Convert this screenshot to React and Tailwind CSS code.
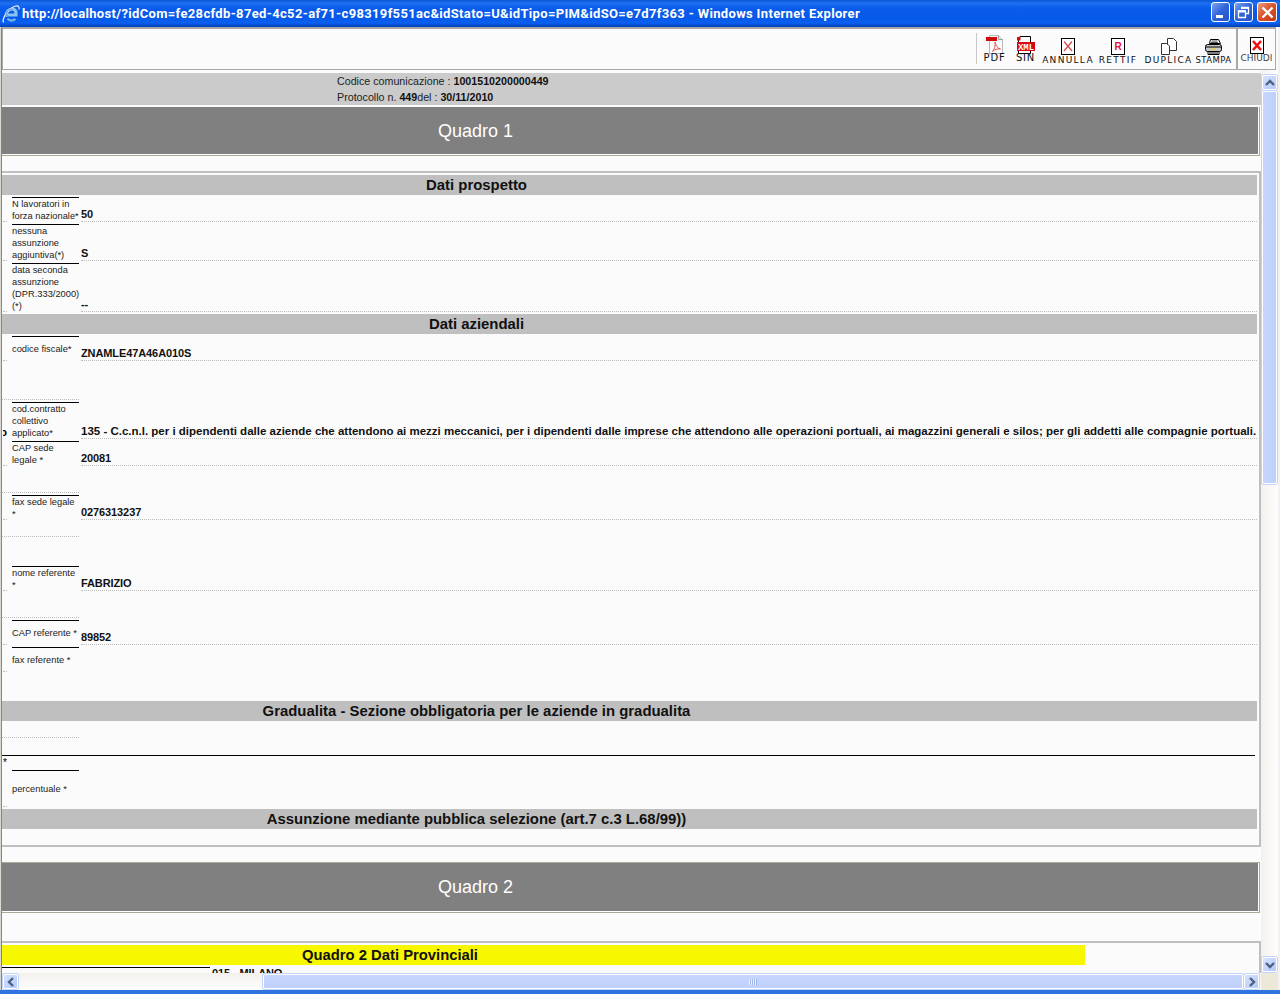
import React from "react";

const FONT = "[font-family:'Liberation_Sans',Arial,sans-serif]";

function Chevron({ dir }) {
  const d = {
    up: "M2 8 L6 4 L10 8",
    down: "M2 4 L6 8 L10 4",
    left: "M8 2 L4 6 L8 10",
    right: "M4 2 L8 6 L4 10",
  }[dir];
  return (
    <svg width="12" height="12" viewBox="0 0 12 12">
      <path d={d} fill="none" stroke="#4d6185" strokeWidth="2.4" />
    </svg>
  );
}

function ScrollButton({ dir }) {
  return (
    <div className="w-[15px] h-[15px] shrink-0 flex items-center justify-center rounded-[2px] border border-white bg-[linear-gradient(135deg,#d6e2fd,#b4c9f8)] shadow-[0_0_0_1px_#c3d4fc]">
      <Chevron dir={dir} />
    </div>
  );
}

function WinButton({ kind }) {
  const bg =
    kind === "close"
      ? "w-[20px] bg-[linear-gradient(135deg,#ee9a7e,#d8512a_50%,#c23a17)]"
      : "w-[19px] bg-[linear-gradient(135deg,#7fa3f2,#2f63da_50%,#2753c8)]";
  return (
    <div className={`h-[20px] rounded-[3px] border border-white flex items-center justify-center ${bg}`}>
      {kind === "min" && <div className="w-[7px] h-[3px] bg-white mt-[9px] mr-[3px]" />}
      {kind === "max" && (
        <svg width="13" height="13" viewBox="0 0 13 13">
          <path d="M4 1.5h7.5v6H9M1.5 5h7v6.500h-7z" fill="none" stroke="#fff" strokeWidth="1.300" />
          <path d="M4 2h7.500M1.500 5.500h7" stroke="#fff" strokeWidth="2" />
        </svg>
      )}
      {kind === "close" && (
        <svg width="13" height="13" viewBox="0 0 13 13">
          <path d="M1.500 1.500L11.500 11.500M11.500 1.500L1.500 11.500" stroke="#fff" strokeWidth="2.400" />
        </svg>
      )}
    </div>
  );
}

function IEIcon() {
  return (
    <svg width="18" height="20" viewBox="0 0 18 20" className="shrink-0">
      <path d="M4 13c0-5.500 2.800-8 6-8 3 0 4.500 2.500 4 6H6" fill="none" stroke="#8cc4f0" strokeWidth="3.200" />
      <path d="M5.500 14.500c1.500 2.500 5 2.800 8 .5" fill="none" stroke="#6fb0e8" strokeWidth="2.400" />
      <path d="M1.500 18.500C-.5 14 8 3 14 2c2.500-.4 3.500 1 3 3.500" fill="none" stroke="#f0f6fc" strokeWidth="1.200" />
      <path d="M4 13c0-5.500 2.800-8 6-8" fill="none" stroke="#3f86d6" strokeWidth="1" />
    </svg>
  );
}

function PdfIcon() {
  return (
    <svg width="18" height="19" viewBox="0 0 18 19">
      <path d="M3.500 .5h9l4 4v14h-13z" fill="#fdfdfd" stroke="#b8b8b8" />
      <path d="M12.500 .5v4h4" fill="#e8e8e8" stroke="#9a9a9a" />
      <rect x="0" y="2" width="11" height="4" fill="#d00a0a" />
      <path d="M9 7c1 4 2.500 6 5.500 7-3-.3-6 .4-8 2.500 2-2.500 3-5.500 2.500-9.500z" fill="none" stroke="#e2554f" strokeWidth="1" />
    </svg>
  );
}

function XmlIcon() {
  return (
    <svg width="19" height="18" viewBox="0 0 19 18">
      <path d="M4 .5h10.500v17h-12v-14z" fill="#fff" stroke="#000" />
      <path d="M1 1h3.500v3.500H1z" fill="#d00a0a" />
      <rect x="1" y="6" width="18" height="9" fill="#d8060f" />
      <text x="10" y="14" textAnchor="middle" fontFamily="'Liberation Mono',monospace" fontWeight="700" fontSize="9" fill="#fff">XML</text>
    </svg>
  );
}

function PageIcon({ children, w = 14, h = 17 }) {
  return (
    <svg width={w} height={h} viewBox={`0 0 ${w} ${h}`}>
      <rect x=".5" y=".5" width={w - 1} height={h - 1} fill="#fff" stroke="#000" />
      {children}
    </svg>
  );
}

function DupIcon() {
  return (
    <svg width="16" height="17" viewBox="0 0 16 17">
      <path d="M6.500 .5h6l3 3v9h-9z" fill="#fff" stroke="#333" />
      <path d="M.5 5.500h5l3 2.500v8.500h-8z" fill="#fff" stroke="#333" />
    </svg>
  );
}

function PrinterIcon() {
  return (
    <svg width="17" height="16" viewBox="0 0 17 16">
      <path d="M5.500 .5h8l2 4h-11z" fill="#fff" stroke="#000" />
      <path d="M6.500 2h6M6 3.500h7" stroke="#555" />
      <rect x=".5" y="5.500" width="16" height="7" rx="2" fill="#c9c9c9" stroke="#000" />
      <path d="M1 8h15" stroke="#000" />
      <rect x="6" y="9.500" width="5" height="1.500" fill="#e8d53a" />
      <path d="M3 12.500h11v3H3z" fill="#fff" stroke="#000" />
      <path d="M4 14h9" stroke="#000" />
    </svg>
  );
}

function Tool({ w, icon, label, labelClass = "text-[9px] tracking-[1.3px] mt-px", iconTop = "pt-[8px]", iconH = "h-[18px]" }) {
  return (
    <div className={`${w} flex flex-col items-center shrink-0 ${iconTop}`}>
      <div className={`${iconH} flex items-end justify-center`}>{icon}</div>
      <span className={`font-['DejaVu_Sans',sans-serif] whitespace-nowrap leading-[8px] text-[#111] ${labelClass}`}>{label}</span>
    </div>
  );
}

function Toolbar() {
  return (
    <div className="h-[43px] shrink-0 box-border border-t-2 border-b border-x border-[#a8a8a8] bg-[#fbfbfb] flex justify-end mr-[2px]">
      <div className="w-px h-[31px] mt-[4px] bg-[#c8c8c8] shrink-0" />
      <Tool w="w-[35px]" icon={<PdfIcon />} label="PDF" labelClass="text-[10px] tracking-[0.8px]" iconTop="pt-[6px]" iconH="h-[19px]" />
      <Tool w="w-[27px]" icon={<XmlIcon />} label="SIN" labelClass="text-[10px] tracking-[0.8px]" iconTop="pt-[6px]" iconH="h-[19px]" />
      <Tool
        w="w-[58px]"
        icon={
          <PageIcon>
            <path d="M3 3.500L11 13M11 3.500L3 13" stroke="#d84a4a" strokeWidth="1.200" />
          </PageIcon>
        }
        label="ANNULLA"
      />
      <Tool
        w="w-[42px]"
        icon={
          <PageIcon>
            <text x="7" y="12" textAnchor="middle" fontFamily="'Liberation Sans',sans-serif" fontWeight="700" fontSize="10" fill="#e0103a">R</text>
          </PageIcon>
        }
        label="RETTIF"
      />
      <Tool w="w-[59px]" icon={<DupIcon />} label="DUPLICA" />
      <Tool w="w-[31px]" icon={<PrinterIcon />} label="STAMPA" labelClass="text-[8.500px] tracking-[0.4px] mt-px" />
      <div className="w-[7px] shrink-0" />
      <div className="w-[2px] bg-[#a8a8a8] shrink-0" />
      <div className="w-[37px] shrink-0">
        <Tool
          w="w-[37px]"
          icon={
            <PageIcon>
              <path d="M3 4L11 13M11 4L3 13" stroke="#ee1111" strokeWidth="2.600" />
            </PageIcon>
          }
          label="CHIUDI"
          labelClass="text-[9px] text-[#444]"
          iconTop="pt-[7px]"
        />
      </div>
    </div>
  );
}

function QuadroBar({ text, h }) {
  return (
    <div className={`box-border ${h} mr-[1px] border-b border-r border-[#aca899]`}>
      <div className="h-full box-border border-b border-r border-white bg-[#808080] flex">
        <div className="w-[947px] text-center text-white text-[18px] leading-[48px]">{text}</div>
      </div>
    </div>
  );
}

function SectionTitle({ children, mt = "" }) {
  return (
    <div className={`h-[20px] shrink-0 bg-[#bfbfbf] mr-[2px] ${mt}`}>
      <div className="w-[949px] text-center font-bold text-[14.900px] leading-[20px] text-[#111]">{children}</div>
    </div>
  );
}

function Row({ h, lines = [], value, gap = "mt-[2px]", dots = true, clipped, valueDots = true, valueClass = "text-[11px] tracking-[-0.1px]" }) {
  return (
    <div className={`flex ${h} ${gap}`}>
      <div className={`ml-px w-[4px] box-border overflow-hidden flex items-end justify-end ${dots ? "border-b border-dotted border-[#bdbdbd]" : ""}`}>
        {clipped && <span className="font-bold text-[11px] leading-[13px]">{clipped}</span>}
      </div>
      <div className="ml-[5px] w-[67px] shrink-0 box-border border-t border-black flex items-center text-[9.300px] leading-[12px] text-[#222] whitespace-nowrap">
        <div>
          {lines.map((l, i) => (
            <div key={i}>{l}</div>
          ))}
        </div>
      </div>
      <div className={`ml-[2px] mr-[2px] flex-1 box-border flex items-end ${valueDots ? "border-b border-dotted border-[#bdbdbd]" : ""}`}>
        {value && <span className={`font-bold leading-[13px] whitespace-nowrap text-[#111] ${valueClass}`}>{value}</span>}
      </div>
    </div>
  );
}

function Spacer({ h, mt = "" }) {
  return <div className={`w-[77px] box-border border-b border-dotted border-[#bdbdbd] ${h} ${mt}`} />;
}

function Content() {
  return (
    <div className={`flex-1 min-w-0 overflow-hidden bg-[#fbfbfb] ${FONT}`}>
      <div className="h-[3px]" />
      <div className="h-[32px] bg-[#cbcbcb] pl-[335px] text-[10.700px] leading-[16px] text-[#222] whitespace-nowrap">
        <div>
          Codice comunicazione : <b className="text-[#111]">1001510200000449</b>
        </div>
        <div>
          Protocollo n. <b className="text-[#111]">449</b>del : <b className="text-[#111]">30/11/2010</b>
        </div>
      </div>
      <div className="h-[2px]" />
      <QuadroBar text="Quadro 1" h="h-[49px]" />
      <div className="h-[15px]" />

      <div className="box-border border-t-2 border-r-2 border-b-2 border-[#bfbfbf] pt-[2px] h-[676px]">
        <SectionTitle>Dati prospetto</SectionTitle>
        <Row h="h-[25px]" lines={["N lavoratori in", "forza nazionale*"]} value="50" />
        <Row h="h-[37px]" lines={["nessuna", "assunzione", "aggiuntiva(*)"]} value="S" />
        <Row h="h-[49px]" lines={["data seconda", "assunzione", "(DPR.333/2000)", "(*)"]} value="--" />
        <SectionTitle mt="mt-[2px]">Dati aziendali</SectionTitle>
        <Row h="h-[25px]" lines={["codice fiscale*"]} value="ZNAMLE47A46A010S" />
        <Spacer h="h-[39px]" />
        <Row
          h="h-[37px]"
          dots={false}
          clipped="o"
          lines={["cod.contratto", "collettivo", "applicato*"]}
          valueClass="text-[11.500px]"
          value="135 - C.c.n.l. per i dipendenti dalle aziende che attendono ai mezzi meccanici, per i dipendenti dalle imprese che attendono alle operazioni portuali, ai magazzini generali e silos; per gli addetti alle compagnie portuali."
        />
        <Row h="h-[25px]" lines={["CAP sede", "legale *"]} value="20081" />
        <Spacer h="h-[27px]" />
        <Row h="h-[25px]" lines={["fax sede legale", "*"]} value="0276313237" />
        <Spacer h="h-[17px]" />
        <Row h="h-[25px]" gap="mt-[29px]" lines={["nome referente", "*"]} value="FABRIZIO" />
        <Spacer h="h-[27px]" />
        <Row h="h-[25px]" lines={["CAP referente *"]} value="89852" />
        <Row h="h-[25px]" lines={["fax referente *"]} valueDots={false} />
        <SectionTitle mt="mt-[29px]">Gradualita - Sezione obbligatoria per le aziende in gradualita</SectionTitle>
        <Spacer h="h-[17px]" />
        <div className="mt-[17px] mr-[4px] h-px bg-black" />
        <div className="text-[10px] leading-[10px] h-[14px] pl-px pt-[2px]">*</div>
        <Row h="h-[37px]" gap="" lines={["percentuale *"]} valueDots={false} />
        <SectionTitle mt="mt-[2px]">Assunzione mediante pubblica selezione (art.7 c.3 L.68/99))</SectionTitle>
      </div>

      <div className="h-[15px]" />
      <div className="border-t border-[#aca899] mr-[1px]" />
      <QuadroBar text="Quadro 2" h="h-[50px]" />
      <div className="h-[28px]" />

      <div className="box-border border-t-2 border-r-2 border-[#bfbfbf] pt-[2px]">
        <div className="w-[1083px] h-[20px] bg-[#f7f700] flex">
          <div className="w-[776px] text-center font-bold text-[14.800px] leading-[20px] text-[#111]">Quadro 2 Dati Provinciali</div>
        </div>
        <div className="flex h-[20px] mt-[2px]">
          <div className="w-[208px] h-px bg-black" />
          <div className="ml-[2px] font-bold text-[11px] tracking-[-0.1px] leading-[13px] text-[#111] whitespace-nowrap">015 - MILANO</div>
        </div>
      </div>
    </div>
  );
}

function VScroll() {
  return (
    <div className="w-[17px] shrink-0 flex flex-col items-center pt-[5px] pb-px bg-[linear-gradient(90deg,#f3f1ec,#fefefe)]">
      <ScrollButton dir="up" />
      <div className="w-[15px] h-[393px] mt-[1px] rounded-[2px] border border-white bg-[linear-gradient(90deg,#c8d6fd,#bdd0fb)] shadow-[0_0_0_1px_#c3d4fc]" />
      <div className="flex-1" />
      <ScrollButton dir="down" />
    </div>
  );
}

function HScroll() {
  return (
    <div className="h-[17px] shrink-0 flex">
      <div className="flex-1 flex items-center pl-px pr-px bg-[linear-gradient(180deg,#f3f1ec,#fefefe)]">
        <ScrollButton dir="left" />
        <div className="w-[245px] shrink-0" />
        <div className="w-[980px] h-[15px] shrink-0 rounded-[2px] border border-white bg-[linear-gradient(180deg,#c8d6fd,#bdd0fb)] shadow-[0_0_0_1px_#c3d4fc] flex items-center justify-center">
          <div className="w-[8px] h-[6px] bg-[repeating-linear-gradient(90deg,#eef3ff_0,#eef3ff_1px,#9db4e6_1px,#9db4e6_2px)]" />
        </div>
        <div className="w-[1px] shrink-0" />
        <ScrollButton dir="right" />
      </div>
      <div className="w-[17px] shrink-0 bg-[#ece9d8]" />
    </div>
  );
}

function TitleBar() {
  return (
    <div className="h-[27px] shrink-0 flex items-center pl-[2px] pr-[3px] bg-[linear-gradient(180deg,#0a58d8_0%,#1f6ff0_12%,#0a5cec_30%,#0658e8_65%,#0a60f0_85%,#0040b8_100%)]">
      <IEIcon />
      <div className="ml-[2px] flex-1 min-w-0 whitespace-nowrap overflow-hidden text-white font-bold font-['Roboto',sans-serif] text-[13px] tracking-[0.34px] leading-[26px]">
        http://localhost/?idCom=fe28cfdb-87ed-4c52-af71-c98319f551ac&amp;idStato=U&amp;idTipo=PIM&amp;idSO=e7d7f363 - Windows Internet Explorer
      </div>
      <div className="flex gap-[4px] mb-[3px]">
        <WinButton kind="min" />
        <WinButton kind="max" />
        <WinButton kind="close" />
      </div>
    </div>
  );
}

export default function App() {
  return (
    <div className="w-[1280px] h-[994px] overflow-hidden flex flex-col bg-[#fbfbfb]">
      <TitleBar />
      <div className="flex-1 min-h-0 flex">
        <div className="w-[2px] shrink-0 flex">
          <div className="w-px bg-[#d8d8d0]" />
          <div className="w-px bg-[#8a8678]" />
        </div>
        <div className="flex-1 min-w-0 flex flex-col">
          <Toolbar />
          <div className="flex-1 min-h-0 flex">
            <Content />
            <VScroll />
          </div>
          <HScroll />
        </div>
        <div className="w-[2px] shrink-0 bg-[#f2f2f2]" />
      </div>
      <div className="h-[4px] shrink-0 bg-[#2f74e0]" />
    </div>
  );
}
